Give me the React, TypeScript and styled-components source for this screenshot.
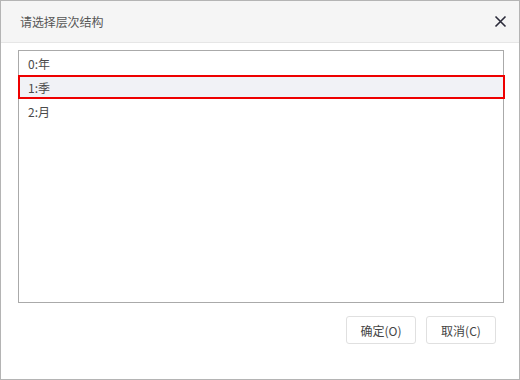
import React from 'react';
import styled, { createGlobalStyle } from 'styled-components';

const GlobalStyle = createGlobalStyle`
  html, body {
    margin: 0;
    padding: 0;
    background: #ffffff;
  }
  body {
    font-family: "Noto Sans CJK SC", "Liberation Sans", sans-serif;
  }
`;

const SDialog = styled.div`
  width: 520px;
  height: 380px;
  box-sizing: border-box;
  border: 1px solid #b4b4b4;
  display: flex;
  flex-direction: column;
  background: #fff;
`;

const SHeader = styled.div`
  height: 42px;
  flex-shrink: 0;
  box-sizing: border-box;
  background: #f5f5f5;
  border-bottom: 1px solid #e6e6e6;
  display: flex;
  align-items: center;
  justify-content: space-between;
  padding: 0 12px 0 19px;
`;

const STitle = styled.span`
  font-size: 12px;
  color: #555;
  letter-spacing: -0.1px;
`;

const SClose = styled.button`
  width: 14px;
  height: 14px;
  padding: 0;
  border: none;
  background: transparent;
  display: flex;
  align-items: center;
  justify-content: center;
  cursor: pointer;
`;

const SBody = styled.div`
  flex: 1;
  padding: 7px 15px 0 17px;
  display: flex;
  flex-direction: column;
`;

const SList = styled.div`
  height: 253px;
  box-sizing: border-box;
  border: 1px solid #aaaaaa;
  display: flex;
  flex-direction: column;
`;

const SRow = styled.div<{ $selected?: boolean }>`
  height: 24px;
  box-sizing: border-box;
  display: flex;
  align-items: center;
  font-size: 12px;
  color: #4a4a4a;
  padding-left: ${(p) => (p.$selected ? '8px' : '9px')};
  margin: ${(p) => (p.$selected ? '0 -2px 0 -1px' : '0')};
  background: ${(p) => (p.$selected ? '#f1f2f6' : 'transparent')};
  border: ${(p) => (p.$selected ? '2px solid #ee0000' : 'none')};
`;

const SFooter = styled.div`
  height: 63px;
  flex-shrink: 0;
  display: flex;
  justify-content: flex-end;
  align-items: flex-start;
  gap: 10px;
  padding: 0 23px 0 0;
  box-sizing: border-box;
`;

const SButton = styled.button`
  width: 70px;
  height: 28px;
  box-sizing: border-box;
  border: 1px solid #e0e0e0;
  border-radius: 3px;
  background: #fff;
  font-family: "Noto Sans CJK SC", "Liberation Sans", sans-serif;
  font-size: 12px;
  color: #444;
  padding: 0;
  cursor: pointer;
`;

const levels = ['0:年', '1:季', '2:月'];

function App() {
  return (
    <>
      <GlobalStyle />
      <SDialog>
        <SHeader>
          <STitle>请选择层次结构</STitle>
          <SClose aria-label="close">
            <svg width="13" height="13" viewBox="0 0 13 13">
              <path d="M1.5 1.5 L11.5 11.5 M11.5 1.5 L1.5 11.5" stroke="#2b2b3a" strokeWidth="1.6" />
            </svg>
          </SClose>
        </SHeader>
        <SBody>
          <SList>
            {levels.map((l, i) => (
              <SRow key={l} $selected={i === 1}>
                {l}
              </SRow>
            ))}
          </SList>
        </SBody>
        <SFooter>
          <SButton>确定(O)</SButton>
          <SButton>取消(C)</SButton>
        </SFooter>
      </SDialog>
    </>
  );
}

export default App;
